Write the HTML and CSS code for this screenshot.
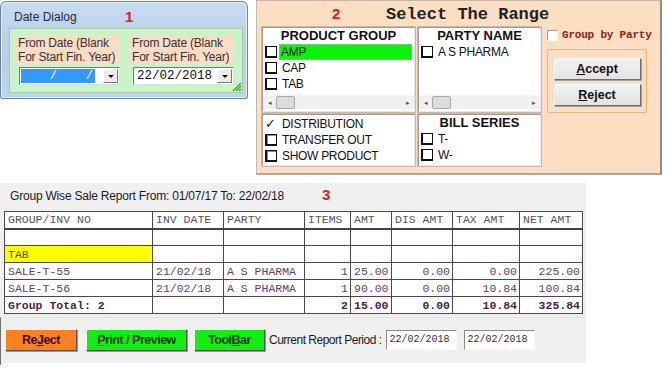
FILE: index.html
```html
<!DOCTYPE html>
<html>
<head>
<meta charset="utf-8">
<link rel="stylesheet" href="styles.css">
</head>
<body>
<div class="top">
  <div class="win">
    <div class="win-title"><span class="win-name">Date Dialog</span><span class="num num1">1</span></div>
    <div class="win-client">
      <div class="date-col">
        <div class="date-label">From Date (Blank<br>For Start Fin. Year)</div>
        <div class="date-input"><span class="sel">&nbsp;&nbsp;&nbsp;&nbsp;/&nbsp;&nbsp;&nbsp;&nbsp;/</span><span class="dd"><i></i></span></div>
      </div>
      <div class="date-col">
        <div class="date-label">From Date (Blank<br>For Start Fin. Year)</div>
        <div class="date-input"><span class="val">22/02/2018</span><span class="dd"><i></i></span></div>
      </div>
      <svg class="grip" width="11" height="11" viewBox="0 0 11 11"><path d="M10 2 L2 10 M10 5 L5 10 M10 8 L8 10" stroke="#2e9a2e" stroke-width="1.2"/></svg>
    </div>
  </div>

  <div class="range">
    <div class="range-head"><span class="num num2">2</span><span class="range-title">Select The Range</span></div>
    <div class="range-grid">
      <div class="lbox prod">
        <div class="lbox-title">PRODUCT GROUP</div>
        <div class="item"><span class="cb"></span><span class="txt hl">AMP</span></div>
        <div class="item"><span class="cb"></span><span class="txt">CAP</span></div>
        <div class="item"><span class="cb"></span><span class="txt">TAB</span></div>
        <div class="hscroll"><span class="arr">&#9666;</span><span class="thumb"></span><span class="track"></span><span class="arr">&#9656;</span></div>
      </div>
      <div class="lbox party">
        <div class="lbox-title">PARTY NAME</div>
        <div class="item"><span class="cb"></span><span class="txt">A S PHARMA</span></div>
        <div class="spacer"></div>
        <div class="hscroll"><span class="arr">&#9666;</span><span class="thumb"></span><span class="track"></span><span class="arr">&#9656;</span></div>
      </div>
      <div class="side">
        <label class="gbp"><span class="wcb"></span>Group by Party</label>
        <div class="btnframe">
          <div class="wbtn"><u>A</u>ccept</div>
          <div class="wbtn"><u>R</u>eject</div>
        </div>
      </div>
      <div class="lbox opts">
        <div class="item"><span class="chk">&#10003;</span><span class="txt">DISTRIBUTION</span></div>
        <div class="item"><span class="cb blue"></span><span class="txt">TRANSFER OUT</span></div>
        <div class="item"><span class="cb blue"></span><span class="txt">SHOW PRODUCT</span></div>
      </div>
      <div class="lbox bills">
        <div class="lbox-title">BILL SERIES</div>
        <div class="item"><span class="cb"></span><span class="txt">T-</span></div>
        <div class="item"><span class="cb"></span><span class="txt">W-</span></div>
      </div>
    </div>
  </div>
</div>

<div class="report">
  <div class="rep-title">Group Wise Sale Report From: 01/07/17 To: 22/02/18<span class="num num3">3</span></div>
  <table class="grid">
    <colgroup>
      <col class="c1"><col class="c2"><col class="c3"><col class="c4"><col class="c5"><col class="c6"><col class="c7"><col class="c8">
    </colgroup>
    <tr class="hdr"><td>GROUP/INV NO</td><td>INV DATE</td><td>PARTY</td><td>ITEMS</td><td>AMT</td><td>DIS AMT</td><td>TAX AMT</td><td>NET AMT</td></tr>
    <tr><td></td><td></td><td></td><td></td><td></td><td></td><td></td><td></td></tr>
    <tr><td class="yel">TAB</td><td></td><td></td><td></td><td></td><td></td><td></td><td></td></tr>
    <tr class="data"><td>SALE-T-55</td><td>21/02/18</td><td>A S PHARMA</td><td class="r">1</td><td>25.00</td><td class="r">0.00</td><td class="r">0.00</td><td class="r">225.00</td></tr>
    <tr class="data"><td>SALE-T-56</td><td>21/02/18</td><td>A S PHARMA</td><td class="r">1</td><td>90.00</td><td class="r">0.00</td><td class="r">10.84</td><td class="r">100.84</td></tr>
    <tr class="data tot"><td>Group Total: 2</td><td></td><td></td><td class="r">2</td><td>15.00</td><td class="r">0.00</td><td class="r">10.84</td><td class="r">325.84</td></tr>
  </table>
  <div class="bar">
    <div class="cbtn orange">Re<u>J</u>ect</div>
    <div class="cbtn green wide"><u>P</u>rint / Preview</div>
    <div class="cbtn green">Tool<u>B</u>ar</div>
    <span class="period">Current Report Period :</span>
    <span class="pbox">22/02/2018</span>
    <span class="pbox">22/02/2018</span>
  </div>
</div>
</body>
</html>
```

FILE: styles.css
```css
* { box-sizing: border-box; }
html, body { margin: 0; padding: 0; background: #fff; }
body { width: 669px; height: 368px; overflow: hidden; font-family: "Liberation Sans", Arial, sans-serif; }

.top { display: flex; height: 175px; align-items: flex-start; }

/* Window 1 */
.win {
  width: 248px; height: 98px; margin-top: 1px; margin-right: 8px;
  border: 1px solid #6b83a3; border-radius: 6px 6px 2px 2px;
  background: linear-gradient(#c9dcf2, #b8cfeb 40%, #bed3ec);
  box-shadow: inset 0 0 0 1px #e4eefa;
  display: flex; flex-direction: column;
}
.win-title { height: 26px; display: flex; align-items: center; padding-left: 13px; padding-top: 3px; }
.win-name { font-size: 12px; color: #1e2a3a; width: 111px; }
.num { color: #e2161b; font-weight: bold; font-family: "Liberation Sans", Arial, sans-serif; font-size: 15px; }
.win-client {
  position: relative;
  margin: 0 4px 5px 8px; flex: 1;
  background: #c9f4c9; border: 1px solid #a9c9a9;
  display: flex; gap: 9px; padding: 6px 0 0 6px;
}
.date-col { width: 105px; }
.date-label {
  background: #fcdcc4; height: 29px; font-size: 12px; line-height: 14px; color: #333; padding-left: 2px; width: 104px;
  white-space: nowrap; letter-spacing: -0.2px; padding-top: 1px;
}
.date-input {
  margin-top: 3px; margin-left: 3px; width: 101px; height: 18px; background: #fff;
  border: 1px solid; border-color: #7a7a7a #e0e0e0 #e0e0e0 #7a7a7a;
  display: flex; align-items: stretch; padding: 1px;
}
.date-col:last-child .date-input { margin-left: 4px; }
.sel { background: #3399ff; color: #fff; width: 74px; font-family: "Liberation Mono", monospace; font-size: 12px; line-height: 14px; }
.val { flex: 1; font-family: "Liberation Mono", monospace; font-size: 12.5px; line-height: 14px; color: #111; padding-left: 2px; }
.sel + .dd { margin-left: auto; }
.dd { width: 15px; background: #ececec; border: 1px solid; border-color: #fff #777 #777 #fff; display: flex; align-items: center; justify-content: center; }
.dd i { width: 0; height: 0; border-left: 3px solid transparent; border-right: 3px solid transparent; border-top: 3px solid #000; }
.grip { position: absolute; right: 0; bottom: 0; }

/* Window 2 */
.range {
  width: 406px; height: 175px; background: #fcdec2;
  border: 1px solid #c9b7a6; border-right: 2px solid #8c8c8c; border-bottom: 2px solid #b3a494;
  padding: 0 0 0 5px;
}
.range-head { height: 26px; display: flex; align-items: center; position: relative; }
.num2 { position: absolute; left: 70px; top: 4px; }
.range-title { margin-left: 124px; font-family: "Liberation Mono", monospace; font-weight: bold; font-size: 17px; color: #222; }
.range-grid {
  display: grid; grid-template-columns: 153px 123px 1fr; grid-template-rows: 85px 52px;
  column-gap: 3px; row-gap: 2px;
}
.lbox {
  background: #fff; border: 1px solid; border-color: #9a9a9a #e8e8e8 #e8e8e8 #9a9a9a;
  box-shadow: 0 0 0 1px #c9b9a9;
  display: flex; flex-direction: column; font-size: 12px; color: #111;
}
.lbox-title { text-align: center; font-weight: bold; font-size: 13px; height: 16px; line-height: 16px; color: #111; }
.item { display: flex; align-items: center; height: 16px; padding-left: 2px; }
.cb {
  width: 12px; height: 12px; background: #fff; flex: none;
  border: 1px solid #111; border-left-width: 2px; border-bottom-width: 2px; margin-right: 5px;
}
.cb.blue { border-color: #111; box-shadow: inset 1px 1px 0 #6a8fd0; }
.chk { width: 12px; margin-right: 5px; font-size: 13px; line-height: 12px; color: #111; }
.txt { letter-spacing: -0.3px; }
.hl { background: #0df20d; flex: 1; margin-right: 2px; border: 1px solid #6fcf6f; padding-left: 1px; height: 16px; line-height: 14px; }
.prod .item:nth-child(2) .cb { margin-right: 2px; }
.spacer { flex: 1; }
.prod .hscroll, .party .hscroll { margin-top: auto; }
.hscroll { height: 14px; display: flex; background: #f0f0f0; border-top: 1px solid #f4f4f4; margin-bottom: 2px; }
.arr { width: 13px; font-size: 7px; color: #555; text-align: center; line-height: 13px; }
.thumb { width: 19px; background: #dcdcdc; border: 1px solid #a8a8a8; border-radius: 2px; }
.track { flex: 1; }
.side { grid-row: 1 / span 2; grid-column: 3; padding-left: 3px; }
.gbp { display: flex; align-items: center; font-family: "Liberation Mono", monospace; font-size: 11px; font-weight: bold; color: #8a2424; height: 14px; margin-top: 1px; letter-spacing: -0.2px; }
.wcb { width: 11px; height: 11px; background: #fff; border: 1px solid; border-color: #9b9b9b #fff #fff #9b9b9b; margin-right: 4px; }
.btnframe {
  margin-top: 7px; width: 100px; height: 64px; border: 1px solid #f0b27c; border-radius: 2px;
  display: flex; flex-direction: column; align-items: center; padding-top: 8px; gap: 4px;
}
.wbtn {
  width: 87px; height: 22px; background: linear-gradient(#f2f2f2, #e2e2e2);
  border: 1px solid; border-color: #fff #6e6e6e #6e6e6e #fff; box-shadow: 1px 1px 0 #a0a0a0;
  font-weight: bold; font-size: 12.5px; text-align: center; line-height: 20px; color: #111;
}
.opts { grid-column: 1; grid-row: 2; padding-top: 1px; }
.bills { grid-column: 2; grid-row: 2; }

/* Report */
.report {
  margin-top: 8px; width: 586px; height: 180px; background: #f0f0f0;
  padding: 0 0 0 4px;
}
.rep-title { height: 28px; line-height: 24px; font-size: 12px; padding-left: 6px; color: #1a1a1a; letter-spacing: -0.2px; }
.num3 { margin-left: 38px; font-size: 15px; }
.grid {
  border-collapse: collapse; table-layout: fixed; width: 578px; background: #fff;
  font-family: "Liberation Mono", monospace; font-size: 11.5px;
}
.c1 { width: 148px; } .c2 { width: 71px; } .c3 { width: 81px; } .c4 { width: 46px; }
.c5 { width: 41px; } .c6 { width: 61px; } .c7 { width: 67px; } .c8 { width: 63px; }
.grid td { border: 1px solid #4a4a4a; height: 17px; padding: 0 2px 0 3px; white-space: nowrap; overflow: hidden; color: #6a3d6a; }
.grid .hdr td { color: #555; border-bottom: 2px solid #444; }
.grid td.r { text-align: right; }
.grid td.yel { background: #ffff00; color: #5a4a1a; }
.grid .tot td { font-weight: bold; color: #4a2448; }
.bar {
  display: flex; align-items: center; height: 48px; margin-left: -4px; padding-left: 4px; padding-bottom: 4px;
  border-top: 1px solid #e2e2e2; margin-top: 3px; border-left: 1px solid #707070;
}
.cbtn {
  height: 22px; padding: 0 8px; font-weight: bold; font-size: 12.5px; line-height: 20px; text-align: center;
  border: 1px solid; border-color: #fff #555 #555 #fff; box-shadow: 1px 1px 0 #999;
  letter-spacing: -0.5px; color: #222;
}
.orange { background: #ff8020; width: 72px; color: #3a0a0a; margin-right: 9px; }
.green { background: #11ee11; color: #0a3a0a; }
.wide { width: 101px; margin-right: 7px; }
.green:not(.wide) { width: 71px; }
.period { margin-left: 4px; font-size: 12px; letter-spacing: -0.5px; color: #1a1a1a; }
.pbox {
  margin-left: 4px; width: 71px; height: 20px; background: #fff;
  border: 1px solid; border-color: #8a8a8a #f8f8f8 #f8f8f8 #8a8a8a;
  font-family: "Liberation Mono", monospace; font-size: 10px; line-height: 18px; padding-left: 3px; color: #333;
}
.pbox + .pbox { margin-left: 7px; }
```
